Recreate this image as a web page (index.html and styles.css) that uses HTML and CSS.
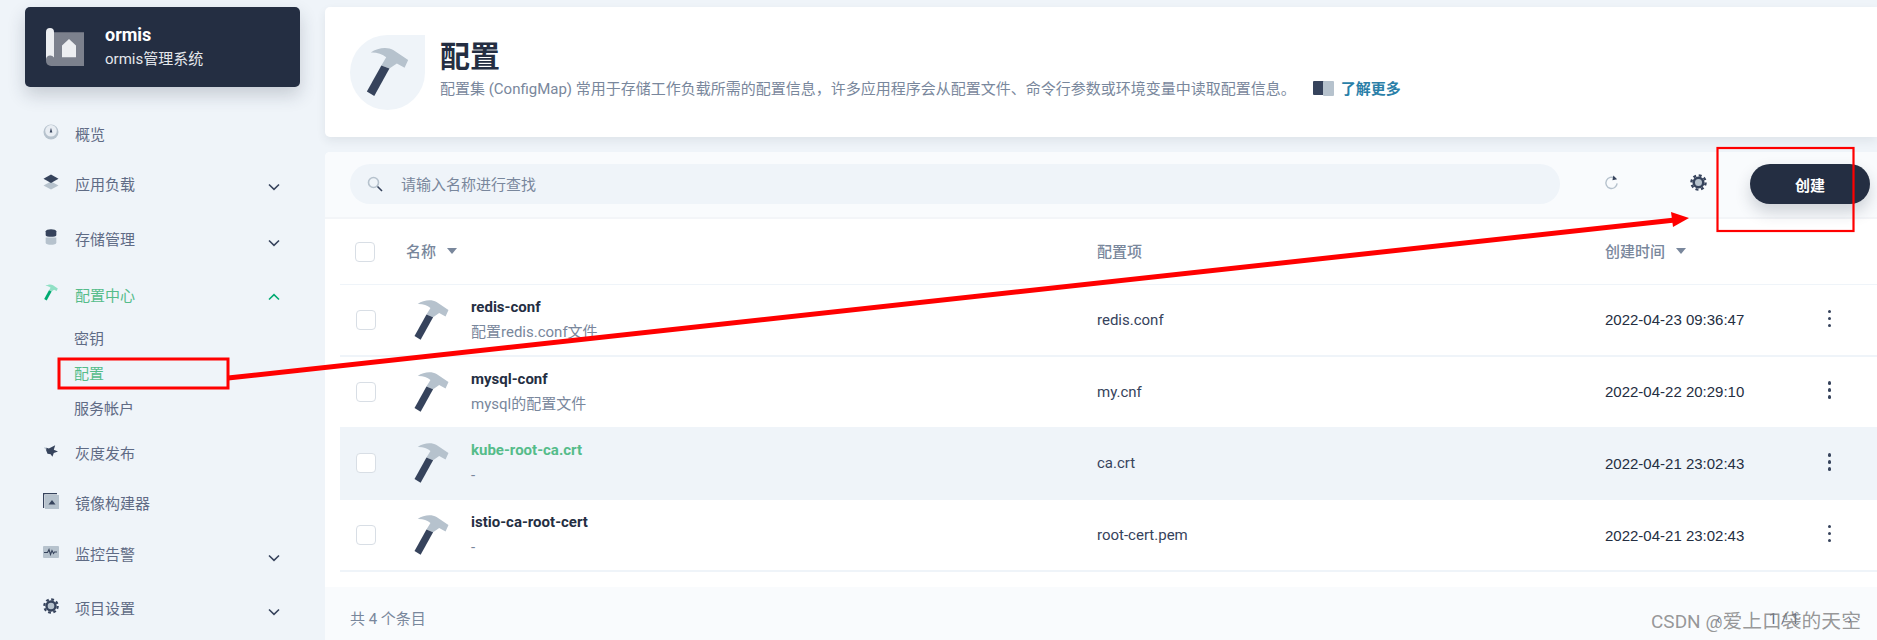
FILE: index.html
```html
<!DOCTYPE html>
<html lang="zh">
<head>
<meta charset="utf-8">
<title>配置</title>
<link rel="stylesheet" href="styles.css">
</head>
<body>
<svg class="defs" width="0" height="0" aria-hidden="true">
  <symbol id="hammer" viewBox="110 140 132 155">
    <path class="h-head" d="M124 157C145 143 175 138 195 150L240 180L229 204L205 191L182 207L157 197L172 172C160 162 142 156 124 157Z"/>
    <path class="h-handle" d="M157 197L182 207L135 292L112 278Z"/>
  </symbol>
  <symbol id="chev-down" viewBox="0 0 12 8"><path d="M1 1.5L6 6.3L11 1.5" fill="none" stroke="#36435c" stroke-width="1.6"/></symbol>
</svg>
<div class="app">
  <aside class="side">
    <div class="brand">
      <svg class="brand-icon" viewBox="0 0 38 38">
        <path d="M4 4.300H38V38H5A5 5 0 0 1 0 33V8Z" fill="#7c818d"/>
        <path d="M0 4A4 4 0 0 1 8 4V29.500A4.500 4.500 0 0 0 4 27.500A4.500 4.500 0 0 0 0 31Z" fill="#eceef1"/>
        <path d="M16 17.500L23 11L30 17.500V29.300H16Z" fill="#eceef1"/>
      </svg>
      <div class="brand-text">
        <div class="brand-name">ormis</div>
        <div class="brand-sub">ormis管理系统</div>
      </div>
    </div>
    <nav class="nav">
      <div class="nav-item">
        <svg class="nav-icon" viewBox="0 0 16 16"><circle cx="8" cy="8" r="7.500" fill="#b6c2cd"/><circle cx="8" cy="6.800" r="5.800" fill="#e8edf3"/><path d="M8 3.800L9.300 8.500H6.700Z" fill="#36435c"/></svg>
        <span>概览</span>
      </div>
      <div class="nav-item nav-exp">
        <svg class="nav-icon" viewBox="0 0 16 16"><path d="M8 7.500L0.500 11.500L8 15.500L15.500 11.500Z" fill="#b6c2cd"/><path d="M8 0.500L0.500 4.800L8 9L15.500 4.800Z" fill="#36435c"/></svg>
        <span>应用负载</span>
        <svg class="chev"><use href="#chev-down"/></svg>
      </div>
      <div class="nav-item nav-exp">
        <svg class="nav-icon" viewBox="0 0 16 18"><path d="M2 9.500H14V15.500C14 17 11 17.800 8 17.800S2 17 2 15.500Z" fill="#b6c2cd"/><path d="M2 2.500C2 1 5 0.200 8 0.200S14 1 14 2.500V7C14 8.300 11 8.800 8 8.800S2 8.300 2 7Z" fill="#36435c"/></svg>
        <span>存储管理</span>
        <svg class="chev"><use href="#chev-down"/></svg>
      </div>
      <div class="nav-item active">
        <svg class="nav-icon hammer-green"><use href="#hammer"/></svg>
        <span>配置中心</span>
        <svg class="chev chev-up" viewBox="0 0 12 8"><path d="M1 6.500L6 1.700L11 6.500" fill="none" stroke="#00aa72" stroke-width="1.600"/></svg>
      </div>
      <div class="sub-list">
        <div class="sub-item">密钥</div>
        <div class="sub-item active">配置</div>
        <div class="sub-item">服务帐户</div>
      </div>
      <div class="nav-item">
        <svg class="nav-icon nav-icon-bird" viewBox="28 22 40 33"><path d="M28 28L36 29L34 35L30 31Z" fill="#b6c2cd"/><path d="M35 29L42 31L60 22L56 35L68 40L56 44L52 55L47 48L38 46L34 36Z" fill="#36435c"/></svg>
        <span>灰度发布</span>
      </div>
      <div class="nav-item nav-before-monitor">
        <svg class="nav-icon" viewBox="0 0 16 16"><rect x="2" y="2" width="14" height="14" fill="#b6c2cd"/><path d="M0.500 15V0.500H14" fill="none" stroke="#36435c" stroke-width="1.400"/><path d="M9 7L12.500 11.500H5.500Z" fill="#36435c"/></svg>
        <span>镜像构建器</span>
      </div>
      <div class="nav-item nav-exp nav-monitor">
        <svg class="nav-icon nav-icon-wide" viewBox="0 0 16 12"><rect width="16" height="12" rx="1" fill="#b6c2cd"/><path d="M1 6.500H4.500L6 3.500L7.500 8.500L9 4.500L10.500 7.500L11.500 6H14" fill="none" stroke="#36435c" stroke-width="1.100"/></svg>
        <span>监控告警</span>
        <svg class="chev"><use href="#chev-down"/></svg>
      </div>
      <div class="nav-item">
        <svg class="nav-icon" viewBox="0 0 16 16"><circle cx="8" cy="8" r="4.500" fill="#b6c2cd" stroke="#36435c" stroke-width="2.400"/><circle cx="8" cy="8" r="6.700" fill="none" stroke="#36435c" stroke-width="2.200" stroke-dasharray="2.800 2.460"/></svg>
        <span>项目设置</span>
        <svg class="chev"><use href="#chev-down"/></svg>
      </div>
    </nav>
  </aside>

  <main class="main">
    <section class="head-card">
      <div class="head-icon"><svg class="hammer-big"><use href="#hammer"/></svg></div>
      <div class="head-text">
        <h1 class="title">配置</h1>
        <p class="desc">
          <span>配置集 (ConfigMap) 常用于存储工作负载所需的配置信息，许多应用程序会从配置文件、命令行参数或环境变量中读取配置信息。</span>
          <svg class="book" viewBox="0 0 22 15"><rect x="0" y="0" width="11" height="14" rx="1" fill="#36435c"/><rect x="10" y="0" width="11" height="15" rx="1" fill="#b6c2cd"/></svg>
          <a class="more">了解更多</a>
        </p>
      </div>
    </section>

    <section class="list-card">
      <div class="toolbar">
        <div class="search">
          <svg class="search-icon" viewBox="0 0 16 16"><circle cx="6.500" cy="6.500" r="5" fill="none" stroke="#b6c2cd" stroke-width="1.600"/><path d="M10.500 10.500L15 15" stroke="#36435c" stroke-width="1.600"/></svg>
          <span>请输入名称进行查找</span>
        </div>
        <svg class="refresh" viewBox="0 0 16 16"><path d="M11.500 3.500A6 6 0 1 0 14 9" fill="none" stroke="#b6c2cd" stroke-width="1.500"/><path d="M9 5.500L10 0.500L14 4.500Z" fill="#36435c"/></svg>
        <svg class="gear" viewBox="0 0 16 16"><circle cx="8" cy="8" r="4.500" fill="#b6c2cd" stroke="#36435c" stroke-width="2.400"/><circle cx="8" cy="8" r="6.700" fill="none" stroke="#36435c" stroke-width="2.200" stroke-dasharray="2.800 2.460"/></svg>
        <button class="create">创建</button>
      </div>

      <div class="row row-head">
        <span class="check check-head"></span>
        <div class="th th-name">名称<i class="sort"></i></div>
        <div class="th">配置项</div>
        <div class="th">创建时间<i class="sort"></i></div>
      </div>

      <div class="row">
        <span class="check"></span>
        <div class="name-cell">
          <svg class="hammer"><use href="#hammer"/></svg>
          <div><div class="name">redis-conf</div><div class="note">配置redis.conf文件</div></div>
        </div>
        <div class="val">redis.conf</div>
        <div class="date">2022-04-23 09:36:47</div>
        <div class="kebab"><i></i><i></i><i></i></div>
      </div>
      <div class="row">
        <span class="check"></span>
        <div class="name-cell">
          <svg class="hammer"><use href="#hammer"/></svg>
          <div><div class="name">mysql-conf</div><div class="note">mysql的配置文件</div></div>
        </div>
        <div class="val">my.cnf</div>
        <div class="date">2022-04-22 20:29:10</div>
        <div class="kebab"><i></i><i></i><i></i></div>
      </div>
      <div class="row row-hover">
        <span class="check"></span>
        <div class="name-cell">
          <svg class="hammer"><use href="#hammer"/></svg>
          <div><div class="name name-green">kube-root-ca.crt</div><div class="note">-</div></div>
        </div>
        <div class="val">ca.crt</div>
        <div class="date">2022-04-21 23:02:43</div>
        <div class="kebab"><i></i><i></i><i></i></div>
      </div>
      <div class="row">
        <span class="check"></span>
        <div class="name-cell">
          <svg class="hammer"><use href="#hammer"/></svg>
          <div><div class="name">istio-ca-root-cert</div><div class="note">-</div></div>
        </div>
        <div class="val">root-cert.pem</div>
        <div class="date">2022-04-21 23:02:43</div>
        <div class="kebab"><i></i><i></i><i></i></div>
      </div>

      <div class="spacer"></div>
      <div class="foot">
        <span>共 4 个条目</span>
        <div class="pager"><span>‹</span><span>1 / 1</span><span>›</span></div>
      </div>
    </section>
  </main>
</div>

<svg class="notes" viewBox="0 0 1877 640" aria-hidden="true">
  <rect x="59" y="359" width="169" height="29" fill="none" stroke="#f00" stroke-width="3"/>
  <rect x="1717.500" y="148" width="136" height="83" fill="none" stroke="#f00" stroke-width="2.200"/>
  <path d="M228 378L1675 220" stroke="#f00" stroke-width="5"/>
  <path d="M1689 218L1671 212L1673 227Z" fill="#f00"/>
</svg>
<div class="mark"><span class="mark-lat">CSDN @</span><span class="mark-cjk">爱上口袋的天空</span></div>
</body>
</html>
```
FILE: styles.css
```css
* { box-sizing: border-box; }
html, body { margin: 0; height: 640px; overflow: hidden; }
body {
  background: #eff4f9;
  color: #242e42;
  font-family: Roboto, "Noto Sans CJK SC", sans-serif;
  font-size: 15px;
  position: relative;
}
.defs { position: absolute; }
.h-head { fill: var(--hammer-head, #b6c2cd); }
.h-handle { fill: var(--hammer-handle, #36435c); }

.app { display: flex; height: 640px; }
.side { width: 325px; flex: none; padding: 7px 25px 0; }
.brand {
  display: flex; align-items: center; height: 80px; padding-left: 21px; gap: 21px;
  background: #242e42; border-radius: 5px; color: #fff;
  box-shadow: 0 8px 18px rgba(36,46,66,.2);
}
.brand-icon { width: 38px; height: 38px; flex: none; }
.brand-name { font-size: 18px; font-weight: 700; line-height: 25px; }
.brand-sub { font-size: 15px; line-height: 25px; color: #e4e7ec; }

.nav { padding-top: 26px; margin-left: -25px; margin-right: -25px; }
.nav-item {
  display: flex; align-items: center; height: 40px; margin-bottom: 10px;
  padding-left: 43px; color: #5f6b85; position: relative;
}
.nav-exp { margin-bottom: 15.500px; }
.nav-before-monitor { margin-bottom: 11px; }
.nav-monitor { margin-bottom: 14px; }
.nav-item > span { position: absolute; left: 75px; }
.nav-icon { width: 16px; height: 16px; flex: none; margin-top: -3px; }
.nav-icon-wide { height: 12px; }
.nav-icon-bird { width: 14px; height: 12px; margin-left: 1px; }
.hammer-green { width: 14px; height: 17px; margin-left: 1px; --hammer-head: #90e0c5; --hammer-handle: #00aa72; }
.chev { width: 12px; height: 8px; position: absolute; left: 268px; top: 20px; }
.chev-up { top: 19px; }
.nav-item.active { color: #55bc8a; margin-bottom: 7.500px; }
.sub-list { padding-left: 74px; margin-bottom: 6px; }
.sub-item { height: 35px; line-height: 35px; color: #5f6b85; }
.sub-item.active { color: #55bc8a; }

.main { flex: 1; min-width: 0; padding-top: 7px; }
.head-card {
  height: 130px; background: #fff; border-radius: 5px 0 0 5px;
  display: flex; align-items: center; padding-left: 25px; gap: 15px;
  box-shadow: 0 4px 10px rgba(36,46,66,.08);
  position: relative;
}
.head-icon {
  width: 75px; height: 75px; flex: none; background: #eff4f9;
  border-radius: 50% 0 50% 50%; display: flex; align-items: center; justify-content: center;
}
.hammer-big { width: 43px; height: 50px; }
.head-text { padding-bottom: 6px; }
.title { margin: 0; font-size: 30px; line-height: 36px; font-weight: 700; }
.desc { margin: 3px 0 0; line-height: 22px; color: #79879c; display: flex; align-items: center; white-space: nowrap; }
.book { width: 22px; height: 15px; margin-left: 17px; }
.more { margin-left: 6px; color: #2a7fa8; font-weight: 700; }

.list-card { margin-top: 15px; background: #fff; border-radius: 5px 0 0 0; height: 488px; }
.toolbar {
  height: 67px; background: #f9fbfd; border-bottom: 2px solid #f3f5f8; border-radius: 5px 0 0 0;
  display: flex; align-items: center; padding-left: 25px; padding-bottom: 1px;
}
.search {
  width: 1210px; height: 40px; border-radius: 20px; background: #eff4f9;
  display: flex; align-items: center; padding-left: 17px; padding-bottom: 1px; gap: 18px; color: #79879c;
}
.search-icon { width: 16px; height: 16px; }
.refresh { width: 15px; height: 15px; margin-left: 44px; margin-top: -4px; }
.gear { width: 17px; height: 17px; margin-left: 71px; margin-top: -3px; }
.create {
  width: 120px; height: 40px; margin-left: 43px; border: 0; border-radius: 20px;
  background: #242e42; color: #fff; font: 700 15px Roboto, "Noto Sans CJK SC", sans-serif;
  box-shadow: 0 8px 16px rgba(36,46,66,.2);
}

.row {
  display: grid; grid-template-columns: 58px 683px 508px 222px 20px;
  align-items: center; height: 71.750px; margin-left: 15px; padding-left: 16px;
  border-bottom: 2px solid #eff4f9;
}
.row-head { height: 66px; border-bottom-width: 1px; padding-bottom: 2px; }
.row-hover { background: #eff4f9; }
.check { width: 20px; height: 20px; border: 1.500px solid #d8dee5; border-radius: 4px; background: #fff; }
.check-head { margin-left: -1px; margin-top: 2px; }
.th { color: #79879c; font-weight: 500; display: flex; align-items: center; }
.th-name { margin-left: -8px; }
.sort { width: 0; height: 0; margin-left: 11px; border: 5.500px solid transparent; border-top: 6px solid #79879c; border-bottom: 0; }
.name-cell { display: flex; align-items: center; gap: 22px; }
.hammer { width: 35px; height: 42px; flex: none; }
.name { font-weight: 700; line-height: 25px; font-size: 15px; }
.name-green { color: #55bc8a; }
.note { color: #79879c; line-height: 25px; }
.val { color: #36435c; }
.date { color: #242e42; font-family: "Liberation Sans", sans-serif; }
.kebab { display: flex; flex-direction: column; align-items: center; gap: 3.500px; width: 5px; margin-top: -3px; }
.kebab i { width: 3.500px; height: 3.500px; border-radius: 50%; background: #36435c; }
.spacer { height: 15px; }
.foot {
  height: 70px; background: #f9fbfd; padding: 18px 25px 0; color: #79879c;
  display: flex; justify-content: space-between; line-height: 28px;
}
.pager { display: flex; color: #5f6b85; width: 136px; justify-content: space-between; }

.notes { position: absolute; left: 0; top: 0; width: 1877px; height: 640px; pointer-events: none; }
.mark { position: absolute; left: 1651px; top: 609px; color: rgba(125,125,125,.8); white-space: nowrap; display: flex; align-items: baseline; line-height: 26px; }
.mark-lat { font-size: 19px; white-space: pre; }
.mark-cjk { font-size: 19.800px; }
```
